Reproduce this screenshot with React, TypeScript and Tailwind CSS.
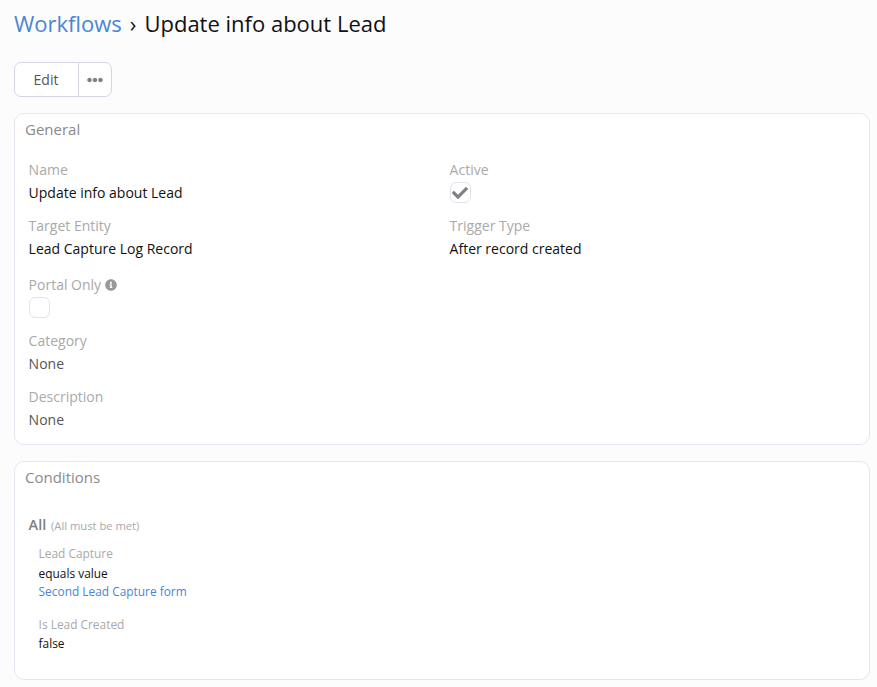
import { FaCheck, FaEllipsisH, FaInfoCircle } from "react-icons/fa";

function Field({ label, children, className = "" }: { label: React.ReactNode; children: React.ReactNode; className?: string }) {
  return (
    <div className={className}>
      <div className="h-[23px] text-[14px] leading-[20px] text-[#a9a9a9]">{label}</div>
      {children}
    </div>
  );
}

function Value({ children, muted = false }: { children: React.ReactNode; muted?: boolean }) {
  return <div className={`h-[20px] text-[14px] leading-[20px] ${muted ? "text-[#555555]" : "text-[#111111]"}`}>{children}</div>;
}

function Check({ checked = false }: { checked?: boolean }) {
  return (
    <div className="-mt-[1px] flex h-[21px] w-[21px] items-center justify-center rounded-[6px] border border-[#e2e2ee] bg-white text-[#808080]">
      {checked && <FaCheck size={16} />}
    </div>
  );
}

export default function App() {
  return (
    <div className="min-h-[687px] overflow-hidden bg-[#fcfcfd] pl-[14px] pr-[7px] font-['Open_Sans',sans-serif]">
      <h1 className="flex h-[62px] items-start pt-[8px] text-[22px] font-normal leading-[30px] text-[#111111]">
        <a className="text-[#4a86d4]">Workflows</a>
        <span className="mx-[8px]">›</span>
        <span>Update info about Lead</span>
      </h1>

      <div className="flex h-[35px] w-[98px] overflow-hidden rounded-[7px] border border-[#d5d5e5] bg-white text-[14px] text-[#555555]">
        <button className="h-full w-[64px] border-r border-[#d5d5e5] pr-[1px]">Edit</button>
        <button className="flex h-full flex-1 items-center justify-center text-[#808080]"><FaEllipsisH size={16} /></button>
      </div>

      <section className="mt-[16px] h-[332px] rounded-[10px] border border-[#e6e6f2] bg-white px-[13.6px]">
        <h2 className="-mx-[3.6px] h-[46px] pt-[5px] text-[15px] font-normal leading-[20px] text-[#8a8a8a]">General</h2>
        <div className="grid grid-cols-[421px_1fr]">
          <div>
            <Field label="Name" className="h-[56px]"><Value>Update info about Lead</Value></Field>
            <Field label="Target Entity" className="h-[59px]"><Value>Lead Capture Log Record</Value></Field>
            <Field label={<span className="flex items-center gap-[4px]">Portal Only <FaInfoCircle size={12} className="text-[#999999]" /></span>} className="h-[56px]"><Check /></Field>
            <Field label="Category" className="h-[56px]"><Value muted>None</Value></Field>
            <Field label="Description"><Value muted>None</Value></Field>
          </div>
          <div>
            <Field label="Active" className="h-[56px]"><Check checked /></Field>
            <Field label="Trigger Type"><Value>After record created</Value></Field>
          </div>
        </div>
      </section>

      <section className="mt-[16px] h-[219px] rounded-[10px] border border-[#e6e6f2] bg-white px-[13.6px]">
        <h2 className="-mx-[3.6px] h-[53px] pt-[5px] text-[15px] font-normal leading-[20px] text-[#8a8a8a]">Conditions</h2>
        <div className="text-[14.5px] font-semibold leading-[20px] text-[#808080]">
          All <span className="ml-[1px] text-[11.2px] font-normal text-[#a9a9a9]">(All must be met)</span>
        </div>
        <div className="ml-[10px] mt-[8px] text-[11.9px] leading-[18px]">
          <div className="h-[20px] text-[#a9a9a9]">Lead Capture</div>
          <div className="text-[#111111]">equals value</div>
          <div className="text-[#4a86d4]">Second Lead Capture form</div>
          <div className="mt-[15px] h-[19px] text-[#a9a9a9]">Is Lead Created</div>
          <div className="text-[#111111]">false</div>
        </div>
      </section>
    </div>
  );
}
